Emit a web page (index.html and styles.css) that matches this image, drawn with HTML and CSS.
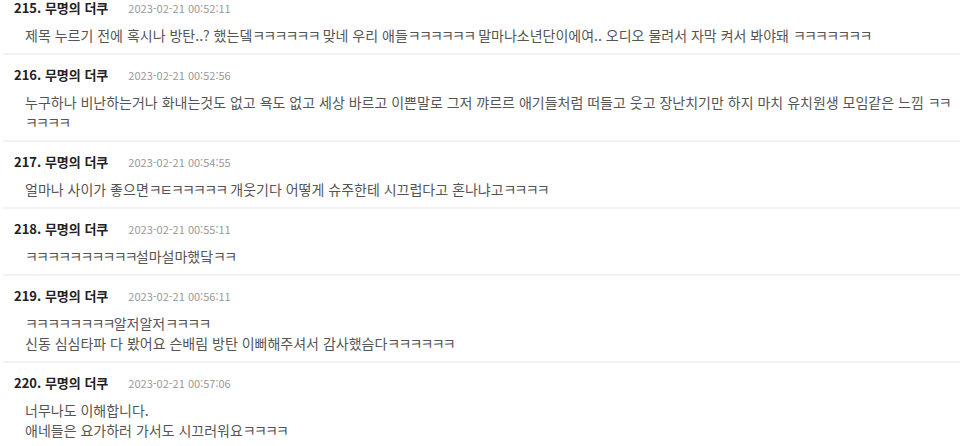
FILE: index.html
```html
<!DOCTYPE html>
<html lang="ko">
<head>
<meta charset="utf-8">
<title>댓글</title>
<link rel="stylesheet" href="styles.css">
</head>
<body>
<ul class="comments">
  <li class="comment">
    <div class="head"><span class="author">215. 무명의 더쿠</span><span class="date">2023-02-21 00:52:11</span></div>
    <div class="text">제목 누르기 전에 혹시나 방탄..? 했는뎈<span class="k">ㅋㅋㅋㅋㅋㅋ</span> 맞네 우리 애들<span class="k">ㅋㅋㅋㅋㅋㅋ</span> 말마나소년단이에여.. 오디오 물려서 자막 켜서 봐야돼 <span class="k">ㅋㅋㅋㅋㅋㅋㅋ</span></div>
  </li>
  <li class="comment">
    <div class="head"><span class="author">216. 무명의 더쿠</span><span class="date">2023-02-21 00:52:56</span></div>
    <div class="text">누구하나 비난하는거나 화내는것도 없고 욕도 없고 세상 바르고 이쁜말로 그저 꺄르르 애기들처럼 떠들고 웃고 장난치기만 하지 마치 유치원생 모임같은 느낌 <span class="k">ㅋㅋㅋㅋㅋㅋ</span></div>
  </li>
  <li class="comment">
    <div class="head"><span class="author">217. 무명의 더쿠</span><span class="date">2023-02-21 00:54:55</span></div>
    <div class="text">얼마나 사이가 좋으면<span class="k">ㅋㅌㅋㅋㅋㅋㅋ</span> 개웃기다 어떻게 슈주한테 시끄럽다고 혼나냐고<span class="k">ㅋㅋㅋㅋ</span></div>
  </li>
  <li class="comment">
    <div class="head"><span class="author">218. 무명의 더쿠</span><span class="date">2023-02-21 00:55:11</span></div>
    <div class="text"><span class="k">ㅋㅋㅋㅋㅋㅋㅋㅋㅋㅋ</span>설마설마했닼<span class="k">ㅋㅋ</span></div>
  </li>
  <li class="comment">
    <div class="head"><span class="author">219. 무명의 더쿠</span><span class="date">2023-02-21 00:56:11</span></div>
    <div class="text"><span class="k">ㅋㅋㅋㅋㅋㅋㅋㅋ</span>알저알저<span class="k">ㅋㅋㅋㅋ</span><br>신동 심심타파 다 봤어요 슨배림 방탄 이뻐해주셔서 감사했슴다<span class="k">ㅋㅋㅋㅋㅋㅋ</span></div>
  </li>
  <li class="comment">
    <div class="head"><span class="author">220. 무명의 더쿠</span><span class="date">2023-02-21 00:57:06</span></div>
    <div class="text">너무나도 이해합니다.<br>애네들은 요가하러 가서도 시끄러워요<span class="k">ㅋㅋㅋㅋ</span></div>
  </li>
</ul>
</body>
</html>
```

FILE: styles.css
```css
html, body {
  margin: 0;
  padding: 0;
  background: #fff;
}
body {
  font-family: "Noto Sans CJK KR", "Noto Sans", sans-serif;
  overflow: hidden;
}
.comments {
  list-style: none;
  margin: -12px 0 0 3px;
  padding: 0;
}
.comment {
  padding: 10px 0 8px 11px;
  border-bottom: 2px solid #f2f2f2;
}
.head {
  display: flex;
  align-items: baseline;
  line-height: 20px;
}
.author {
  font-size: 13px;
  font-weight: bold;
  color: #222;
}
.date {
  margin-left: 20px;
  font-size: 11px;
  color: #999;
}
.text {
  margin-top: 7px;
  padding-left: 11px;
  padding-right: 6px;
  font-size: 14px;
  line-height: 20px;
  color: #555;
}
.k {
  letter-spacing: -1.8px;
}
```
